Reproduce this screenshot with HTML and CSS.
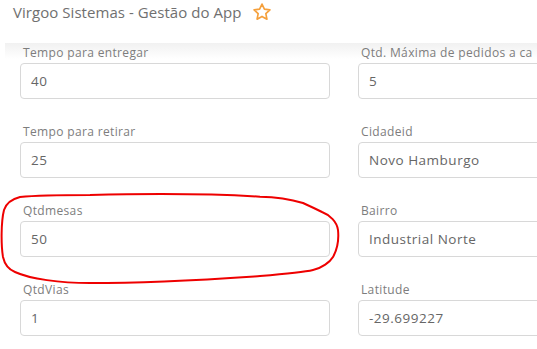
FILE: index.html
```html
<!DOCTYPE html>
<html lang="pt-BR">
<head>
<meta charset="utf-8">
<title>Virgoo Sistemas - Gestão do App</title>
<link rel="stylesheet" href="styles.css">
</head>
<body>
<header class="top">
  <h1 class="title">Virgoo Sistemas - Gestão do App</h1>
  <svg class="star" viewBox="0 0 24 24" width="20" height="20"><path d="M12 2.5l2.9 6.1 6.6.8-4.9 4.6 1.3 6.6L12 17.3l-5.9 3.3 1.3-6.6-4.9-4.6 6.6-.8z" fill="none" stroke="#f5a03c" stroke-width="2" stroke-linejoin="round"/></svg>
</header>
<main class="card">
  <div class="grid">
    <div class="field"><label class="lbl">Tempo para entregar</label><div class="inp">40</div></div>
    <div class="field"><label class="lbl">Qtd. Máxima de pedidos a ca</label><div class="inp">5</div></div>
    <div class="field"><label class="lbl">Tempo para retirar</label><div class="inp">25</div></div>
    <div class="field"><label class="lbl">Cidadeid</label><div class="inp">Novo Hamburgo</div></div>
    <div class="field"><label class="lbl">Qtdmesas</label><div class="inp">50</div></div>
    <div class="field"><label class="lbl">Bairro</label><div class="inp">Industrial Norte</div></div>
    <div class="field"><label class="lbl">QtdVias</label><div class="inp">1</div></div>
    <div class="field"><label class="lbl">Latitude</label><div class="inp">-29.699227</div></div>
  </div>
</main>
<svg class="mark" viewBox="0 0 537 349" width="537" height="349">
  <path d="M90 195 C60 195 30 196 20 197 C12 199 6 204 4 210 C1 222 1 245 3 257 C5 266 10 270 15 272 C30 279 60 283 90 283 C160 283 230 278 260 276 C285 274 305 272 313 270 C322 268 330 262 333 257 C337 250 339 240 338 230 C337 222 330 215 322 212 C312 207 305 204 303 203 C290 199 280 197 260 196.7 C200 193 130 194 90 195 Z" fill="none" stroke="#ee0000" stroke-width="2"/>
</svg>
</body>
</html>
```
FILE: styles.css
```css
html, body {
  margin: 0;
  padding: 0;
  background: #fff;
  overflow: hidden;
}
body {
  width: 537px;
  height: 349px;
  position: relative;
  font-family: "Open Sans", "Liberation Sans", sans-serif;
  color: #666;
}
.top {
  height: 43px;
  display: flex;
  align-items: flex-start;
  padding: 1px 0 0 13px;
  box-sizing: border-box;
  gap: 11px;
}
.title {
  margin: 0;
  font-weight: 400;
  font-size: 15px;
  line-height: 22px;
  letter-spacing: 0.05px;
  color: #707070;
}
.star {
  margin-top: 1px;
}
.card {
  margin-left: 5px;
  width: 900px;
  padding: 3px 0 0 15px;
  background: linear-gradient(#f1f1f1, #fff 16px);
}
.grid {
  display: grid;
  grid-template-columns: 310px 310px;
  column-gap: 28px;
  row-gap: 26px;
}
.field {
  display: flex;
  flex-direction: column;
}
.lbl {
  font-size: 12px;
  line-height: 14px;
  letter-spacing: 0.35px;
  color: #7d7d7d;
  padding-left: 3px;
  margin-bottom: 3px;
  white-space: nowrap;
}
.inp {
  height: 36px;
  box-sizing: border-box;
  border: 1px solid #d8d8d8;
  border-radius: 4px;
  display: flex;
  align-items: center;
  padding-left: 10px;
  font-size: 13.5px;
  letter-spacing: 0.5px;
  color: #666;
}
.mark {
  position: absolute;
  left: 0;
  top: 0;
  pointer-events: none;
}
```
